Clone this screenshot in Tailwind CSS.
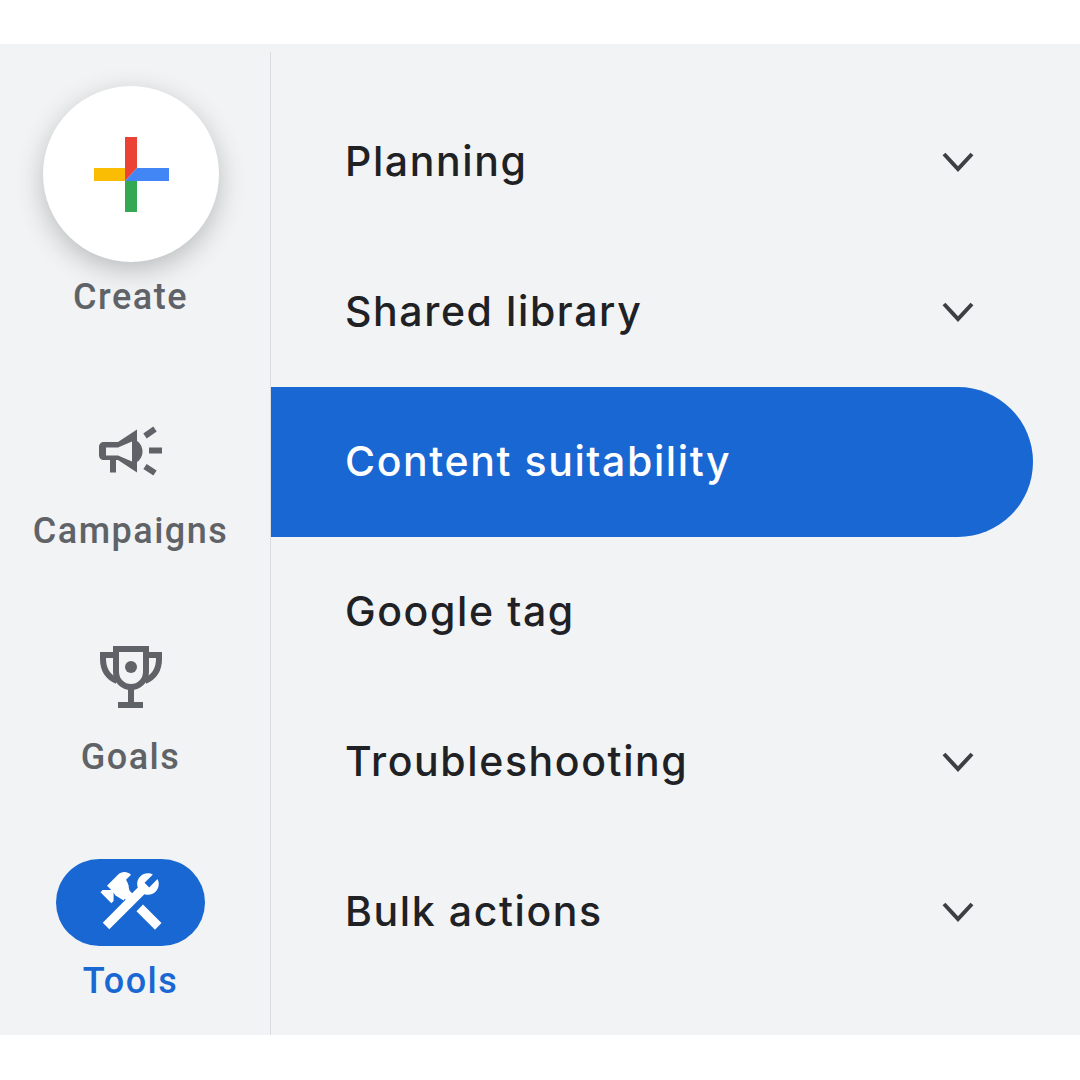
<!doctype html>
<html lang="en">
    <head>
        <meta charset="UTF-8" />
        <meta name="viewport" content="width=device-width, initial-scale=1.0" />
        <title>Tools menu</title>
        <script src="https://cdn.jsdelivr.net/npm/@tailwindcss/browser@4"></script>
    </head>
    <body class="bg-white h-[1080px] overflow-hidden pt-[44px] font-['Roboto',sans-serif]">
        <div class="flex h-[991px] bg-[#f1f3f4]">
            <!-- Left rail -->
            <aside class="w-[271px] shrink-0 mt-2 pr-[9px] border-r border-[#dadce0] flex flex-col items-center text-[#5f6368] text-[36px] leading-[40px] font-medium tracking-[1.5px]">
                <div class="mt-[34px] size-[176px] rounded-full bg-white shadow-[0_8px_26px_rgba(60,64,67,0.3)] flex items-center justify-center">
                    <svg class="size-[76px] translate-x-px translate-y-px" viewBox="0 0 76 76">
                        <rect x="0" y="31" width="32" height="13" fill="#fbbc04" />
                        <rect x="31" y="44" width="12" height="31" fill="#34a853" />
                        <polygon points="31,0 43,0 43,31 31,44" fill="#ea4335" />
                        <polygon points="43,31 75,31 75,44 31,44" fill="#4285f4" />
                    </svg>
                </div>
                <span class="mt-[15px]">Create</span>

                <svg class="mt-[97px] size-[75px]" viewBox="0 0 75 75">
                    <path fill="#5f6368" fill-rule="evenodd" d="M11 28h14l19-12.500v43L25 46h-2v12.500h-6V46h-6c-3 0-5-2-5-5v-8c0-3 2-5 5-5zM13 33.500v8h12l14 6V27.500l-14 6z" />
                    <path fill="#5f6368" d="M44 27c3 2 5.500 6 5.500 10.500S47 46 44 48z" />
                    <path stroke="#5f6368" stroke-width="6" d="M52 22l10-7M56 36.500h13M52 52.500l10 6.500" />
                </svg>
                <span class="mt-[22px]">Campaigns</span>

                <svg class="mt-[94px] size-[66px]" viewBox="0 0 66 66" fill="none" stroke="#5f6368" stroke-width="6">
                    <path d="M18 4h30v23a15 15 0 0 1-30 0z" />
                    <path d="M18 10H5v4c0 10 5 18 14 22M48 10h13v4c0 10-5 18-14 22" />
                    <path d="M33 42v18M20 60h25" />
                    <circle cx="33" cy="22" r="6" fill="#5f6368" stroke="none" />
                </svg>
                <span class="mt-[26px]">Goals</span>

                <div class="mt-[82px] w-[149px] h-[87px] rounded-full bg-[#1967d2] flex items-center justify-center">
                    <svg class="size-[74px] -translate-y-[2px] fill-white" viewBox="0 0 24 24">
                        <path d="M13.78 15.3l6 6 2.11-2.16-6-6zM17.5 10c1.93 0 3.5-1.57 3.5-3.5 0-.58-.16-1.12-.41-1.6l-2.7 2.7-1.49-1.49 2.7-2.7c-.48-.25-1.02-.41-1.6-.41C15.57 3 14 4.57 14 6.5c0 .41.08.8.21 1.16l-1.85 1.85-1.78-1.78.71-.71-1.41-1.41L12 3.49c-1.17-1.17-3.07-1.17-4.24 0L4.22 7.03l1.41 1.41H2.81l-.71.71 3.54 3.54.71-.71V9.15l1.41 1.41.71-.71 1.78 1.78-7.41 7.41 2.12 2.12L16.34 9.79c.36.13.75.21 1.16.21z" />
                        <path d="M4.700 7L7.300 4.500L9.600 3.400L11 6.300L11.500 8.600L9.600 11.800L7 10.200z" />
                    </svg>
                </div>
                <span class="mt-[15px] text-[#1967d2]">Tools</span>
            </aside>

            <!-- Menu list -->
            <nav class="flex-1 pt-[43px] pr-[47px] text-[#202124] text-[41px] font-[450] tracking-[1.6px] font-['Inter',sans-serif]">
                <div class="h-[150px] flex items-center justify-between pl-[74px] pr-[58px]">
                    <span>Planning</span>
                    <svg class="w-[34px] h-[24px]" viewBox="0 0 34 24" fill="none" stroke="#3c4043" stroke-width="4"><path d="M3 4l14 15L31 4" /></svg>
                </div>
                <div class="h-[150px] flex items-center justify-between pl-[74px] pr-[58px]">
                    <span>Shared library</span>
                    <svg class="w-[34px] h-[24px]" viewBox="0 0 34 24" fill="none" stroke="#3c4043" stroke-width="4"><path d="M3 4l14 15L31 4" /></svg>
                </div>
                <div class="h-[150px] flex items-center pl-[74px] bg-[#1967d2] text-white rounded-r-full">
                    <span>Content suitability</span>
                </div>
                <div class="h-[150px] flex items-center pl-[74px]">
                    <span>Google tag</span>
                </div>
                <div class="h-[150px] flex items-center justify-between pl-[74px] pr-[58px]">
                    <span>Troubleshooting</span>
                    <svg class="w-[34px] h-[24px]" viewBox="0 0 34 24" fill="none" stroke="#3c4043" stroke-width="4"><path d="M3 4l14 15L31 4" /></svg>
                </div>
                <div class="h-[150px] flex items-center justify-between pl-[74px] pr-[58px]">
                    <span>Bulk actions</span>
                    <svg class="w-[34px] h-[24px]" viewBox="0 0 34 24" fill="none" stroke="#3c4043" stroke-width="4"><path d="M3 4l14 15L31 4" /></svg>
                </div>
            </nav>
        </div>
    </body>
</html>
